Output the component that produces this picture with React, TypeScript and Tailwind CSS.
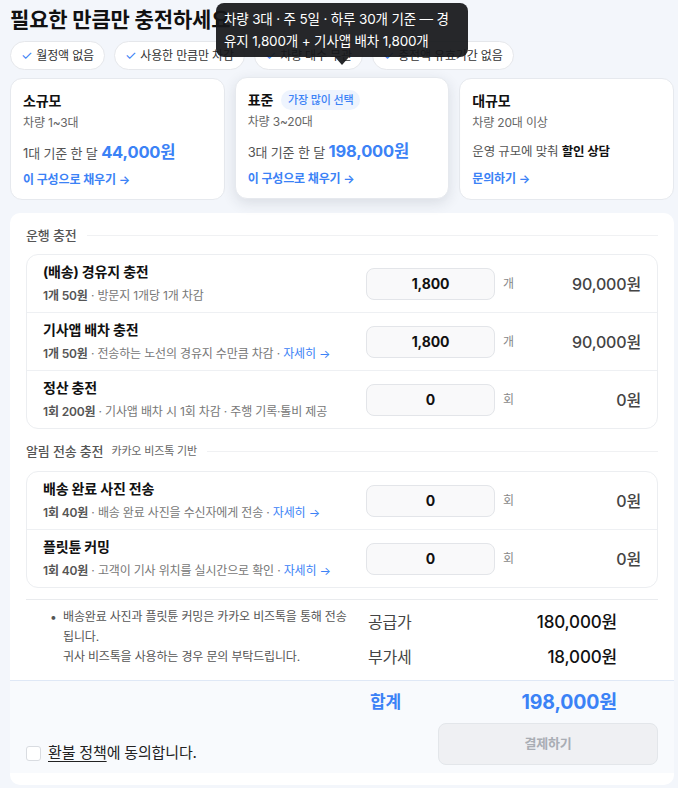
import React from "react";

interface ChargeItem {
  title: string;
  price: string;
  desc: string;
  more?: boolean;
  qty: string;
  unit: string;
  amount: string;
}

const driveItems: ChargeItem[] = [
  { title: "(배송) 경유지 충전", price: "1개 50원", desc: "방문지 1개당 1개 차감", qty: "1,800", unit: "개", amount: "90,000원" },
  { title: "기사앱 배차 충전", price: "1개 50원", desc: "전송하는 노선의 경유지 수만큼 차감", more: true, qty: "1,800", unit: "개", amount: "90,000원" },
  { title: "정산 충전", price: "1회 200원", desc: "기사앱 배차 시 1회 차감 · 주행 기록·톨비 제공", qty: "0", unit: "회", amount: "0원" },
];

const alertItems: ChargeItem[] = [
  { title: "배송 완료 사진 전송", price: "1회 40원", desc: "배송 완료 사진을 수신자에게 전송", more: true, qty: "0", unit: "회", amount: "0원" },
  { title: "플릿튠 커밍", price: "1회 40원", desc: "고객이 기사 위치를 실시간으로 확인", more: true, qty: "0", unit: "회", amount: "0원" },
];

const chips = ["월정액 없음", "사용한 만큼만 차감", "차량 대수 무관", "충전액 유효기간 없음"];

const ChargeRow = ({ item, last }: { item: ChargeItem; last: boolean }) => (
  <div className={`flex items-center px-[16px] py-[8px] ${last ? "" : "border-b border-[#eef0f3]"}`}>
    <div className="flex-1">
      <div className="text-[14px] font-bold leading-[18px] text-[#111]">{item.title}</div>
      <div className="mt-[7px] text-[12px] leading-[16px] text-[#777]">
        <span className="font-semibold text-[#555]">{item.price}</span> · {item.desc}
        {item.more && (
          <>
            {" · "}
            <span className="text-[#3b82f6]">자세히 →</span>
          </>
        )}
      </div>
    </div>
    <input
      type="text"
      readOnly
      value={item.qty}
      className="h-[32px] w-[129px] rounded-[8px] border border-[#e3e5e9] bg-[#f9f9fa] text-center text-[14px] font-bold text-[#111] outline-none"
    />
    <span className="ml-[8px] w-[30px] text-[12px] text-[#888]">{item.unit}</span>
    <span className="w-[108px] text-right text-[16px] font-medium text-[#444]">{item.amount}</span>
  </div>
);

const ChargeGroup = ({ items }: { items: ChargeItem[] }) => (
  <div className="rounded-[12px] border border-[#eceef1]">
    {items.map((item, i) => (
      <ChargeRow key={item.title} item={item} last={i === items.length - 1} />
    ))}
  </div>
);

export default function App() {
  return (
    <div
      className="relative min-h-[788px] w-[678px] bg-[#f3f6fb] tracking-[-0.01em] text-[#111]"
      style={{ fontFamily: 'Inter, "Noto Sans CJK KR", sans-serif' }}
    >
      <div className="ml-[10px] w-[664px] pt-[6px]">
        <h1 className="text-[21px] font-bold leading-[28px]">필요한 만큼만 충전하세요</h1>

        <div className="mt-[7px] flex gap-[9px]">
          {chips.map((c) => (
            <span
              key={c}
              className="flex h-[29px] items-center rounded-full border border-[#e5e7eb] bg-white px-[10px] text-[12px] text-[#333]"
            >
              <span className="mr-[4px] text-[13px] text-[#3b82f6]">✓</span>
              {c}
            </span>
          ))}
        </div>

        <div className="mt-[8px] grid grid-cols-3 gap-[10px]">
          <div className="h-[122px] rounded-[12px] border border-[#e6e9ee] bg-white px-[12px] pt-[12px]">
            <div className="text-[14px] font-bold leading-[20px]">소규모</div>
            <div className="mt-[4px] text-[12px] leading-[16px] text-[#666]">차량 1~3대</div>
            <div className="mt-[9px] text-[13px] leading-[24px] text-[#555]">
              1대 기준 한 달 <span className="text-[16.5px] font-bold text-[#3b82f6]">44,000원</span>
            </div>
            <div className="mt-[6px] text-[12px] font-semibold leading-[18px] text-[#3b82f6]">이 구성으로 채우기 →</div>
          </div>

          <div className="h-[122px] -translate-y-[1px] rounded-[12px] border border-[#e6e9ee] bg-white px-[12px] pt-[12px] shadow-[0_4px_14px_rgba(30,40,60,0.12)]">
            <div className="flex items-center gap-[8px]">
              <span className="text-[14px] font-bold leading-[20px]">표준</span>
              <span className="rounded-full bg-[#eef4fe] px-[7px] text-[11px] font-medium leading-[20px] text-[#3b82f6]">
                가장 많이 선택
              </span>
            </div>
            <div className="mt-[4px] text-[12px] leading-[16px] text-[#666]">차량 3~20대</div>
            <div className="mt-[9px] text-[13px] leading-[24px] text-[#555]">
              3대 기준 한 달 <span className="text-[16.5px] font-bold text-[#3b82f6]">198,000원</span>
            </div>
            <div className="mt-[6px] text-[12px] font-semibold leading-[18px] text-[#3b82f6]">이 구성으로 채우기 →</div>
          </div>

          <div className="h-[122px] rounded-[12px] border border-[#e6e9ee] bg-white px-[12px] pt-[12px]">
            <div className="text-[14px] font-bold leading-[20px]">대규모</div>
            <div className="mt-[4px] text-[12px] leading-[16px] text-[#666]">차량 20대 이상</div>
            <div className="mt-[9px] text-[12.5px] leading-[24px] text-[#555]">
              운영 규모에 맞춰 <span className="font-bold text-[#111]">할인 상담</span>
            </div>
            <div className="mt-[6px] text-[12px] font-semibold leading-[18px] text-[#3b82f6]">문의하기 →</div>
          </div>
        </div>

        <div className="mt-[13px] rounded-[10px] bg-white pb-[12px]">
          <div className="px-[16px] pt-[13px]">
            <div className="flex items-center">
              <span className="text-[13px] font-medium leading-[18px] text-[#555]">운행 충전</span>
              <span className="ml-[10px] h-px flex-1 bg-[#f0f1f3]" />
            </div>
            <div className="mt-[10px]">
              <ChargeGroup items={driveItems} />
            </div>

            <div className="mt-[13px] flex items-center">
              <span className="text-[13px] font-medium leading-[18px] text-[#555]">알림 전송 충전</span>
              <span className="ml-[8px] text-[11px] leading-[18px] text-[#666]">카카오 비즈톡 기반</span>
              <span className="ml-[10px] h-px flex-1 bg-[#f0f1f3]" />
            </div>
            <div className="mt-[11px]">
              <ChargeGroup items={alertItems} />
            </div>

            <div className="mt-[11px] grid grid-cols-[1fr_290px] border-t border-[#e9ebee] pb-[11px]">
              <div className="flex pt-[7px] text-[12px] leading-[20px] text-[#555]">
                <span className="w-[37px] shrink-0 pl-[24px]">•</span>
                <p className="pr-[8px]">
                  배송완료 사진과 플릿튠 커밍은 카카오 비즈톡을 통해 전송 됩니다.
                  <br />
                  귀사 비즈톡을 사용하는 경우 문의 부탁드립니다.
                </p>
              </div>
              <div className="flex flex-col gap-[11px] pr-[41px] pt-[10px]">
                <div className="flex items-center justify-between leading-[24px]">
                  <span className="text-[16px] text-[#444]">공급가</span>
                  <span className="text-[17px] font-medium text-[#111]">180,000원</span>
                </div>
                <div className="flex items-center justify-between leading-[24px]">
                  <span className="text-[16px] text-[#444]">부가세</span>
                  <span className="text-[17px] font-medium text-[#111]">18,000원</span>
                </div>
              </div>
            </div>
          </div>

          <div className="grid grid-cols-[1fr_290px] border-t border-[#dfe8f6] bg-[#f8fafd] px-[16px] pb-[8px] pt-[8px]">
            <div className="flex items-end pb-[2px]">
              <label className="flex items-center gap-[7px] text-[15px] leading-[20px] text-[#222]">
                <span className="h-[15px] w-[15px] rounded-[3px] border border-[#d9dce1] bg-white" />
                <span>
                  <span className="underline underline-offset-[3px]">환불 정책</span>에 동의합니다.
                </span>
              </label>
            </div>
            <div>
              <div className="flex items-center justify-between pl-[2px] pr-[41px] leading-[26px]">
                <span className="text-[17px] font-bold text-[#3b82f6]">합계</span>
                <span className="text-[19.5px] font-bold text-[#3b82f6]">198,000원</span>
              </div>
              <button
                type="button"
                disabled
                className="ml-auto mt-[8px] flex h-[42px] w-[220px] items-center justify-center rounded-[8px] border border-[#e3e6ea] bg-[#eff0f3] text-[13px] font-semibold text-[#a9adb4]"
              >
                결제하기
              </button>
            </div>
          </div>
        </div>
      </div>

      {/* hover tooltip over the chips */}
      <div className="absolute left-[216px] top-[3px] z-10 w-[252px] rounded-[8px] bg-[rgba(22,23,26,0.93)] px-[8px] py-[5px] text-[13.5px] leading-[22px] text-white">
        <div className="whitespace-nowrap">차량 3대 · 주 5일 · 하루 30개 기준 — 경</div>
        <div className="whitespace-nowrap">유지 1,800개 + 기사앱 배차 1,800개</div>
        <svg className="absolute left-[119px] top-full" width="14" height="8" viewBox="0 0 14 8">
          <path d="M0 0 L14 0 L7 8 Z" fill="rgba(22,23,26,0.93)" />
        </svg>
      </div>
    </div>
  );
}
